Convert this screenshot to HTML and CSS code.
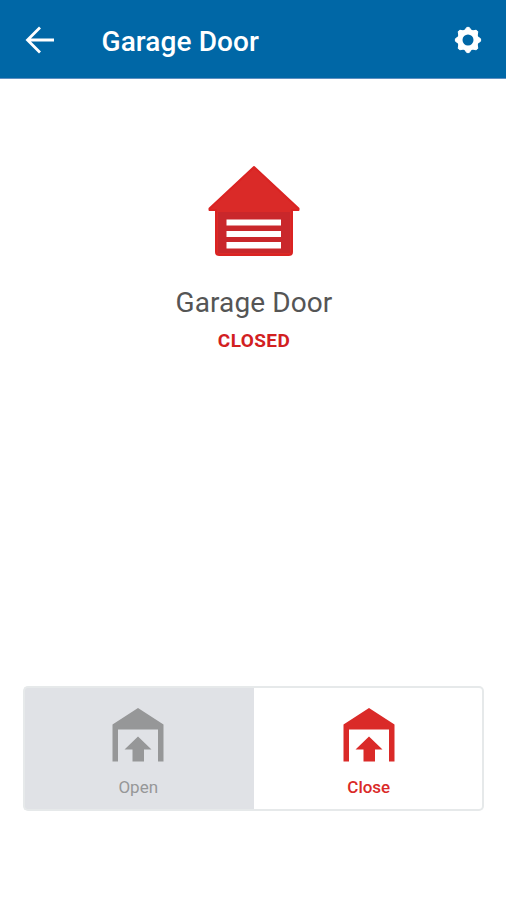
FILE: index.html
```
<!DOCTYPE html>
<html lang="en">
<head>
    <meta charset="UTF-8">
    <meta name="viewport" content="width=device-width, initial-scale=1.0">
    <title>Garage Door</title>
    <link rel="stylesheet" href="styles.css">
</head>
<body>

    <div class="header">
        <a href="#back" class="back" aria-label="Back">
            <svg width="30" height="28" viewBox="0 0 30 28">
                <path d="M15 1.5 L2.5 14 L15 26.5 M2.5 14 H29" fill="none" stroke="#fff" stroke-width="2.8"/>
            </svg>
        </a>
        <h1>Garage Door</h1>
        <a href="#settings" class="settings" aria-label="Settings">
            <svg width="28" height="28" viewBox="-14 -14 28 28">
                <circle r="8.1" fill="none" stroke="#fff" stroke-width="5.2"/>
                <g fill="#fff" stroke="#fff" stroke-width="1" stroke-linejoin="round">
                    <path id="tooth" d="M-3.4 -9.5 L-1.2 -12.6 H1.2 L3.4 -9.5 Z"/>
                    <use href="#tooth" transform="rotate(45)"/>
                    <use href="#tooth" transform="rotate(90)"/>
                    <use href="#tooth" transform="rotate(135)"/>
                    <use href="#tooth" transform="rotate(180)"/>
                    <use href="#tooth" transform="rotate(225)"/>
                    <use href="#tooth" transform="rotate(270)"/>
                    <use href="#tooth" transform="rotate(315)"/>
                </g>
            </svg>
        </a>
    </div>

    <!-- Current door status -->
    <div class="status">
        <svg width="94" height="92" viewBox="0 0 94 92">
            <path d="M47 2 L91.5 43.5 V45 H85 V87 Q85 90 82 90 H12 Q9 90 9 87 V45 H2.5 V43.5 Z" fill="#da2a28" stroke="#da2322" stroke-width="2" stroke-linejoin="round"/>
            <path d="M11 47 H83 V88 H11 Z" fill="#c9272b"/>
            <path d="M19.5 54.5 H74 V60.5 H19.5 Z M19.5 66 H74 V72 H19.5 Z M19.5 77 H74 V83.5 H19.5 Z" fill="#fff"/>
        </svg>
        <h2>Garage Door</h2>
        <span class="state">CLOSED</span>
    </div>

    <!-- Open / Close buttons -->
    <div class="controls">
        <button type="button" class="control open">
            <svg width="52" height="54" viewBox="0 0 52 54">
                <path d="M26 0 L51.5 16.5 V53.5 H46 V21.5 H6 V53.5 H0.5 V16.5 Z M26 28.5 L39.5 41.5 H32 V53.5 H20.5 V41.5 H12.5 Z" fill="currentColor"/>
            </svg>
            <span>Open</span>
        </button>
        <button type="button" class="control close">
            <svg width="52" height="54" viewBox="0 0 52 54">
                <path d="M26 0 L51.5 16.5 V53.5 H46 V21.5 H6 V53.5 H0.5 V16.5 Z M26 28.5 L39.5 41.5 H32 V53.5 H20.5 V41.5 H12.5 Z" fill="currentColor"/>
            </svg>
            <span>Close</span>
        </button>
    </div>

</body>
</html>
```
FILE: styles.css
```
* {
    box-sizing: border-box;
}
body {
    font-family: Roboto, Arial, sans-serif;
    margin: 0;
    padding: 0;
    height: 900px;
    display: flex;
    flex-direction: column;
    background-color: #fff;
    color: #555;
}
.header {
    display: flex;
    align-items: center;
    height: 79px;
    padding: 1px 24px 0 25px;
    background-color: #0067a6;
    border-bottom: 1px solid #5f8fc0;
}
.header svg {
    display: block;
}
.header h1 {
    flex: 1;
    margin: 4px 0 0 46.5px;
    font-size: 28px;
    font-weight: 500;
    line-height: 34px;
    letter-spacing: 0.1px;
    color: #fff;
}
.status {
    flex: 1;
    display: flex;
    flex-direction: column;
    align-items: center;
    padding: 86px 0 0 2px;
}
.status h2 {
    margin: 29px 0 0;
    font-size: 28px;
    font-weight: 400;
    line-height: 34px;
    letter-spacing: 0.1px;
}
.state {
    margin-top: 9px;
    font-size: 19px;
    font-weight: 700;
    line-height: 24px;
    letter-spacing: 0.4px;
    color: #d2201f;
}
.controls {
    display: flex;
    height: 125px;
    margin: 0 22px 89px 23px;
}
.control {
    flex: 1;
    display: flex;
    flex-direction: column;
    align-items: center;
    padding: 20px 0 0;
    border: 2px solid #e6e9ea;
    border-radius: 0 5px 5px 0;
    background-color: #fff;
    font-family: inherit;
    font-size: 17px;
    line-height: 20px;
}
.control span {
    margin-top: 15px;
}
.open {
    border-right: 0;
    border-radius: 5px 0 0 5px;
    background-color: #e0e2e6;
    color: #969798;
}
.open svg,
.open span {
    margin-right: 2px;
}
.close {
    border-left: 0;
    color: #da2a28;
    font-weight: 500;
}
.close svg,
.close span {
    margin-left: 2px;
}
```
